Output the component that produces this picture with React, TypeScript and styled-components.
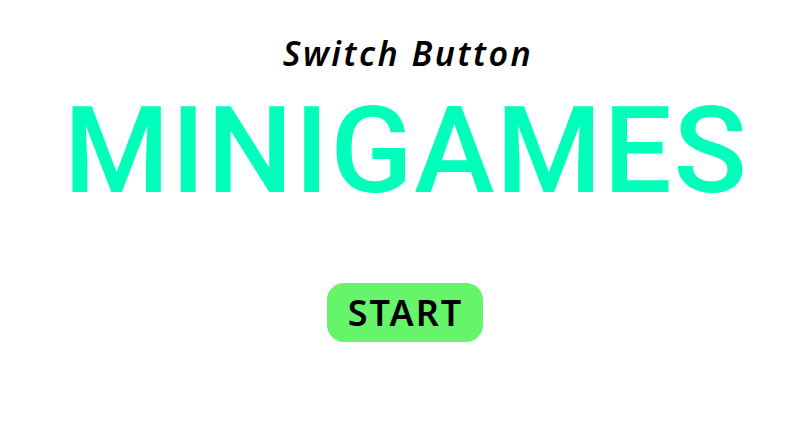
import React from "react";
import styled, { createGlobalStyle } from "styled-components";

const Global = createGlobalStyle`
  html, body { margin: 0; padding: 0; background: #ffffff; }
  body { font-family: "Noto Sans", "DejaVu Sans", sans-serif; }
`;

const Page = styled.main`
  width: 797px;
  height: 424px;
  display: flex;
  flex-direction: column;
  align-items: center;
`;

const Subtitle = styled.h2`
  margin: 33px 0 0 19px;
  font-family: "Noto Sans", sans-serif;
  font-style: italic;
  font-weight: 600;
  font-size: 34px;
  line-height: 40px;
  letter-spacing: 2.5px;
  color: #000;
`;

const Title = styled.h1`
  margin: 28px 0 0 15px;
  font-family: Roboto, "Noto Sans", sans-serif;
  font-weight: 500;
  font-size: 121px;
  line-height: 100px;
  color: #00ffbb;
  letter-spacing: 1.6px;
`;

const StartButton = styled.button`
  margin: 82px 0 0 12px;
  width: 156px;
  height: 59px;
  border: none;
  border-radius: 17px;
  background: #66f46a;
  color: #000;
  font-family: "Noto Sans", sans-serif;
  font-weight: 600;
  font-size: 36px;
  line-height: 40px;
  letter-spacing: 2px;
  padding: 0 0 0 2px;
  display: flex;
  align-items: center;
  justify-content: center;
  cursor: pointer;
`;

export default function App() {
  return (
    <>
      <Global />
      <Page>
        <Subtitle>Switch Button</Subtitle>
        <Title>MINIGAMES</Title>
        <StartButton>START</StartButton>
      </Page>
    </>
  );
}
